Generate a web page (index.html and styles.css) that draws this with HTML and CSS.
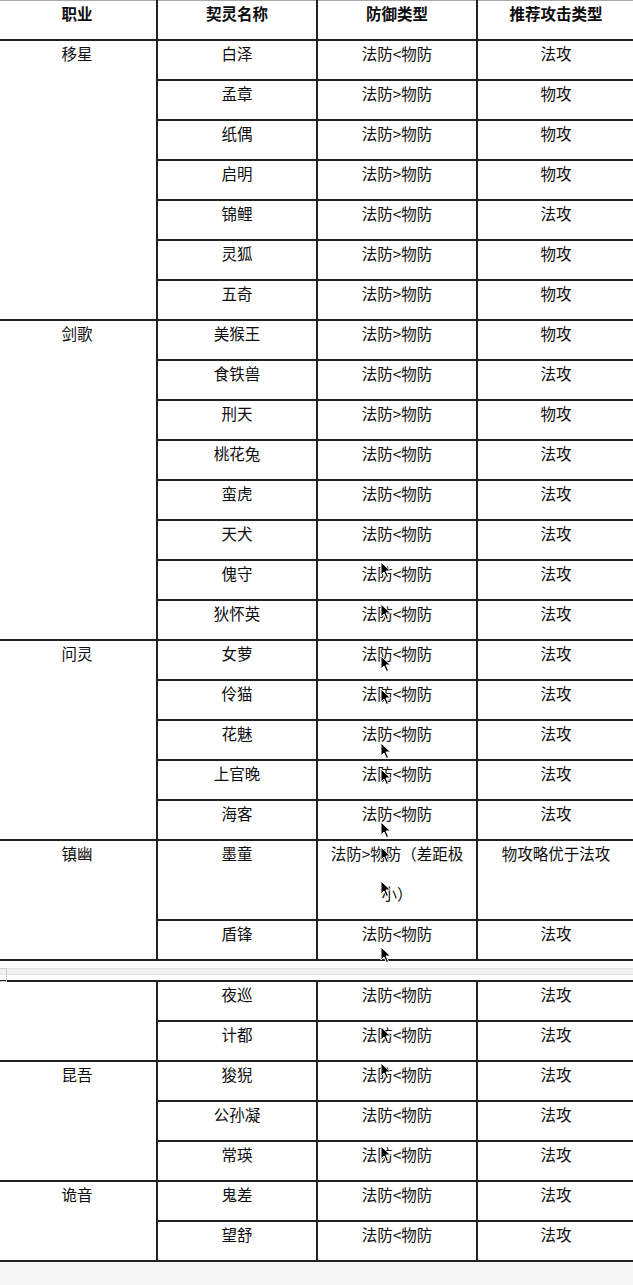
FILE: index.html
```html
<!DOCTYPE html>
<html lang="zh">
<head>
<meta charset="utf-8">
<title>契灵防御类型</title>
<link rel="stylesheet" href="styles.css">
</head>
<body>
<div class="page">
  <table class="grid first">
    <colgroup><col class="c1"><col class="c2"><col class="c3"><col class="c4"></colgroup>
    <thead>
      <tr class="row head"><th><div class="t">职业</div></th><th><div class="t">契灵名称</div></th><th><div class="t">防御类型</div></th><th><div class="t">推荐攻击类型</div></th></tr>
    </thead>
    <tbody>
      <tr class="row"><td rowspan="7"><div class="t">移星</div></td><td><div class="t">白泽</div></td><td><div class="t">法防&lt;物防</div></td><td><div class="t">法攻</div></td></tr>
      <tr class="row"><td><div class="t">孟章</div></td><td><div class="t">法防&gt;物防</div></td><td><div class="t">物攻</div></td></tr>
      <tr class="row"><td><div class="t">纸偶</div></td><td><div class="t">法防&gt;物防</div></td><td><div class="t">物攻</div></td></tr>
      <tr class="row"><td><div class="t">启明</div></td><td><div class="t">法防&gt;物防</div></td><td><div class="t">物攻</div></td></tr>
      <tr class="row"><td><div class="t">锦鲤</div></td><td><div class="t">法防&lt;物防</div></td><td><div class="t">法攻</div></td></tr>
      <tr class="row"><td><div class="t">灵狐</div></td><td><div class="t">法防&gt;物防</div></td><td><div class="t">物攻</div></td></tr>
      <tr class="row"><td><div class="t">五奇</div></td><td><div class="t">法防&gt;物防</div></td><td><div class="t">物攻</div></td></tr>

      <tr class="row"><td rowspan="8"><div class="t">剑歌</div></td><td><div class="t">美猴王</div></td><td><div class="t">法防&gt;物防</div></td><td><div class="t">物攻</div></td></tr>
      <tr class="row"><td><div class="t">食铁兽</div></td><td><div class="t">法防&lt;物防</div></td><td><div class="t">法攻</div></td></tr>
      <tr class="row"><td><div class="t">刑天</div></td><td><div class="t">法防&gt;物防</div></td><td><div class="t">物攻</div></td></tr>
      <tr class="row"><td><div class="t">桃花兔</div></td><td><div class="t">法防&lt;物防</div></td><td><div class="t">法攻</div></td></tr>
      <tr class="row"><td><div class="t">蛮虎</div></td><td><div class="t">法防&lt;物防</div></td><td><div class="t">法攻</div></td></tr>
      <tr class="row"><td><div class="t">天犬</div></td><td><div class="t">法防&lt;物防</div></td><td><div class="t">法攻</div></td></tr>
      <tr class="row"><td><div class="t">傀守</div></td><td><div class="t">法防&lt;物防</div></td><td><div class="t">法攻</div></td></tr>
      <tr class="row"><td><div class="t">狄怀英</div></td><td><div class="t">法防&lt;物防</div></td><td><div class="t">法攻</div></td></tr>

      <tr class="row"><td rowspan="5"><div class="t">问灵</div></td><td><div class="t">女萝</div></td><td><div class="t">法防&lt;物防</div></td><td><div class="t">法攻</div></td></tr>
      <tr class="row"><td><div class="t">伶猫</div></td><td><div class="t">法防&lt;物防</div></td><td><div class="t">法攻</div></td></tr>
      <tr class="row"><td><div class="t">花魅</div></td><td><div class="t">法防&lt;物防</div></td><td><div class="t">法攻</div></td></tr>
      <tr class="row"><td><div class="t">上官晚</div></td><td><div class="t">法防&lt;物防</div></td><td><div class="t">法攻</div></td></tr>
      <tr class="row"><td><div class="t">海客</div></td><td><div class="t">法防&lt;物防</div></td><td><div class="t">法攻</div></td></tr>

      <tr class="row tall"><td rowspan="2"><div class="t">镇幽</div></td><td><div class="t">墨童</div></td><td><div class="t">法防&gt;物防（差距极小）</div></td><td><div class="t">物攻略优于法攻</div></td></tr>
      <tr class="row"><td><div class="t">盾锋</div></td><td><div class="t">法防&lt;物防</div></td><td><div class="t">法攻</div></td></tr>
    </tbody>
  </table>

  <div class="page-break"><span class="marker"></span><div class="band"></div></div>

  <table class="grid second">
    <colgroup><col class="c1"><col class="c2"><col class="c3"><col class="c4"></colgroup>
    <tbody>
      <tr class="row"><td rowspan="2"></td><td><div class="t">夜巡</div></td><td><div class="t">法防&lt;物防</div></td><td><div class="t">法攻</div></td></tr>
      <tr class="row"><td><div class="t">计都</div></td><td><div class="t">法防&lt;物防</div></td><td><div class="t">法攻</div></td></tr>
      <tr class="row"><td rowspan="3"><div class="t">昆吾</div></td><td><div class="t">狻猊</div></td><td><div class="t">法防&lt;物防</div></td><td><div class="t">法攻</div></td></tr>
      <tr class="row"><td><div class="t">公孙凝</div></td><td><div class="t">法防&lt;物防</div></td><td><div class="t">法攻</div></td></tr>
      <tr class="row"><td><div class="t">常瑛</div></td><td><div class="t">法防&lt;物防</div></td><td><div class="t">法攻</div></td></tr>
      <tr class="row"><td rowspan="2"><div class="t">诡音</div></td><td><div class="t">鬼差</div></td><td><div class="t">法防&lt;物防</div></td><td><div class="t">法攻</div></td></tr>
      <tr class="row"><td><div class="t">望舒</div></td><td><div class="t">法防&lt;物防</div></td><td><div class="t">法攻</div></td></tr>
    </tbody>
  </table>

  <div class="cursors" aria-hidden="true">
    <svg class="cur" style="left:380px;top:561px" width="12" height="18" viewBox="0 0 12 18"><path d="M1 1 L1 14 L4 11 L6.5 16.5 L8.5 15.5 L6 10 L10.5 10 Z" fill="#000" stroke="#fff" stroke-width="1"/></svg>
    <svg class="cur" style="left:380px;top:603px" width="12" height="18" viewBox="0 0 12 18"><path d="M1 1 L1 14 L4 11 L6.5 16.5 L8.5 15.5 L6 10 L10.5 10 Z" fill="#000" stroke="#fff" stroke-width="1"/></svg>
    <svg class="cur" style="left:380px;top:655px" width="12" height="18" viewBox="0 0 12 18"><path d="M1 1 L1 14 L4 11 L6.5 16.5 L8.5 15.5 L6 10 L10.5 10 Z" fill="#000" stroke="#fff" stroke-width="1"/></svg>
    <svg class="cur" style="left:380px;top:688px" width="12" height="18" viewBox="0 0 12 18"><path d="M1 1 L1 14 L4 11 L6.5 16.5 L8.5 15.5 L6 10 L10.5 10 Z" fill="#000" stroke="#fff" stroke-width="1"/></svg>
    <svg class="cur" style="left:380px;top:742px" width="12" height="18" viewBox="0 0 12 18"><path d="M1 1 L1 14 L4 11 L6.5 16.5 L8.5 15.5 L6 10 L10.5 10 Z" fill="#000" stroke="#fff" stroke-width="1"/></svg>
    <svg class="cur" style="left:380px;top:768px" width="12" height="18" viewBox="0 0 12 18"><path d="M1 1 L1 14 L4 11 L6.5 16.5 L8.5 15.5 L6 10 L10.5 10 Z" fill="#000" stroke="#fff" stroke-width="1"/></svg>
    <svg class="cur" style="left:380px;top:821px" width="12" height="18" viewBox="0 0 12 18"><path d="M1 1 L1 14 L4 11 L6.5 16.5 L8.5 15.5 L6 10 L10.5 10 Z" fill="#000" stroke="#fff" stroke-width="1"/></svg>
    <svg class="cur" style="left:380px;top:846px" width="12" height="18" viewBox="0 0 12 18"><path d="M1 1 L1 14 L4 11 L6.5 16.5 L8.5 15.5 L6 10 L10.5 10 Z" fill="#000" stroke="#fff" stroke-width="1"/></svg>
    <svg class="cur" style="left:380px;top:880px" width="12" height="18" viewBox="0 0 12 18"><path d="M1 1 L1 14 L4 11 L6.5 16.5 L8.5 15.5 L6 10 L10.5 10 Z" fill="#000" stroke="#fff" stroke-width="1"/></svg>
    <svg class="cur" style="left:380px;top:946px" width="12" height="18" viewBox="0 0 12 18"><path d="M1 1 L1 14 L4 11 L6.5 16.5 L8.5 15.5 L6 10 L10.5 10 Z" fill="#000" stroke="#fff" stroke-width="1"/></svg>
    <svg class="cur" style="left:380px;top:1026px" width="12" height="18" viewBox="0 0 12 18"><path d="M1 1 L1 14 L4 11 L6.5 16.5 L8.5 15.5 L6 10 L10.5 10 Z" fill="#000" stroke="#fff" stroke-width="1"/></svg>
    <svg class="cur" style="left:380px;top:1062px" width="12" height="18" viewBox="0 0 12 18"><path d="M1 1 L1 14 L4 11 L6.5 16.5 L8.5 15.5 L6 10 L10.5 10 Z" fill="#000" stroke="#fff" stroke-width="1"/></svg>
    <svg class="cur" style="left:380px;top:1145px" width="12" height="18" viewBox="0 0 12 18"><path d="M1 1 L1 14 L4 11 L6.5 16.5 L8.5 15.5 L6 10 L10.5 10 Z" fill="#000" stroke="#fff" stroke-width="1"/></svg>
  </div>
</div>
</body>
</html>
```

FILE: styles.css
```css
html {
  background: #f7f7f7;
}
body {
  margin: 0;
  overflow: hidden;
  font-family: "Noto Sans CJK SC", "Noto Sans", sans-serif;
  font-size: 15.5px;
  color: #0d0d0d;
}
.page {
  position: relative;
  width: 633px;
  overflow: hidden;
  background: #ffffff;
}
.grid {
  border-collapse: collapse;
  table-layout: fixed;
  width: 638px;
  margin-left: -4px;
  background: #ffffff;
}
.c1 { width: 160px; }
.c2 { width: 160px; }
.c3 { width: 160px; }
.c4 { width: 158px; }
.grid td,
.grid th {
  border: 2px solid #222;
  padding: 0 7px;
  vertical-align: top;
  text-align: center;
  height: 38px;
  line-height: 40px;
}
.grid th {
  font-weight: 700;
  border-top: 1px solid #aaa;
}
.t {
  margin-top: -8px;
}
.tall td {
  height: 78px;
}
.page-break {
  height: 19px;
  position: relative;
  background: #fff;
  display: flex;
  flex-direction: column;
  justify-content: center;
}
.band {
  height: 5px;
  margin-top: 2px;
  border-top: 1px solid #e2e2e2;
  border-bottom: 1px solid #e2e2e2;
  background: #f0f0f0;
}
.marker {
  position: absolute;
  left: 0;
  top: 7px;
  width: 6px;
  height: 12px;
  border: 1px solid #cfcfcf;
  border-left: none;
}
.cursors {
  position: absolute;
  inset: 0;
  pointer-events: none;
}
.cur {
  position: absolute;
  display: block;
}
```
